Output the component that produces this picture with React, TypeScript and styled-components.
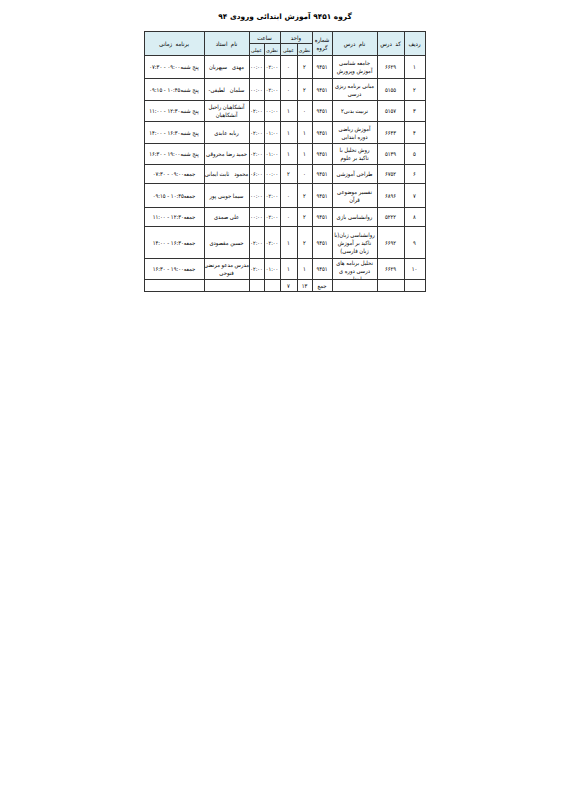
import React from "react";
import styled, { createGlobalStyle } from "styled-components";

const GlobalStyle = createGlobalStyle`
  html, body {
    margin: 0;
    padding: 0;
    background: #ffffff;
  }
  body {
    font-family: "DejaVu Sans Condensed", "DejaVu Sans", sans-serif;
    color: #111;
  }
`;

// column widths, right to left
const COLUMN_WIDTHS = [21, 27, 45, 20, 15, 17, 16, 15, 45, 60];
const HEAD_HEIGHTS = [12, 12];

interface CourseRow {
  height: number;
  cells: string[];
}

// ردیف، کد درس، نام درس، شماره گروه، واحد نظری، واحد عملی، ساعت نظری، ساعت عملی، نام استاد، برنامه زمانی
const rows: CourseRow[] = [
  {
    height: 23,
    cells: ["۱", "۶۶۲۹", "جامعه شناسی\nآموزش وپرورش", "۹۴۵۱", "۲", "۰", "۰۲:۰۰", "۰۰:۰۰", "مهدی   سپهریان", "پنج شنبه۰۹:۰۰ - ۰۷:۳۰"],
  },
  {
    height: 22,
    cells: ["۲", "۵۱۵۵", "مبانی برنامه ریزی\nدرسی", "۹۴۵۱", "۲", "۰", "۰۲:۰۰", "۰۰:۰۰", "سلمان   لطیفی-", "پنج شنبه۱۰:۴۵ - ۰۹:۱۵"],
  },
  {
    height: 21,
    cells: ["۳", "۵۱۵۷", "تربیت بدنی۲", "۹۴۵۱", "۰", "۱", "۰۰:۰۰", "۰۲:۰۰", "آتشکاهیان راحیل\nآتشکاهیان", "پنج شنبه۱۲:۳۰ - ۱۱:۰۰"],
  },
  {
    height: 22,
    cells: ["۴", "۶۶۴۳", "آموزش ریاضی\nدوره ابتدایی", "۹۴۵۱", "۱", "۱", "۰۱:۰۰", "۰۲:۰۰", "ربابه عابدی", "پنج شنبه۱۶:۳۰ - ۱۴:۰۰"],
  },
  {
    height: 21,
    cells: ["۵", "۵۱۳۹", "روش تحلیل با\nتاکید بر علوم", "۹۴۵۱", "۱", "۱", "۰۱:۰۰", "۰۲:۰۰", "حمید رضا محروقی", "پنج شنبه۱۹:۰۰ - ۱۶:۳۰"],
  },
  {
    height: 19,
    cells: ["۶", "۶۷۵۲", "طراحی آموزشی", "۹۴۵۱", "۰", "۲", "۰۰:۰۰", "۰۶:۰۰", "محمود   ثابت ایمانی", "جمعه۰۹:۰۰ - ۰۷:۳۰"],
  },
  {
    height: 24,
    cells: ["۷", "۶۸۹۶", "تفسیر موضوعی\nقرآن", "۹۴۵۱", "۲", "۰", "۰۲:۰۰", "۰۰:۰۰", "سیما جوینی پور", "جمعه۱۰:۴۵ - ۰۹:۱۵"],
  },
  {
    height: 19,
    cells: ["۸", "۵۲۲۲", "روانشناسی بازی", "۹۴۵۱", "۲", "۰", "۰۲:۰۰", "۰۰:۰۰", "علی صمدی", "جمعه۱۲:۳۰ - ۱۱:۰۰"],
  },
  {
    height: 32,
    cells: ["۹", "۶۶۹۲", "روانشناسی زبان(با\nتاکید بر آموزش\nزبان فارسی)", "۹۴۵۱", "۲", "۱", "۰۲:۰۰", "۰۲:۰۰", "حسین مقصودی", "جمعه۱۶:۳۰ - ۱۴:۰۰"],
  },
  {
    height: 21,
    cells: ["۱۰", "۶۶۲۹", "تحلیل برنامه های\nدرسی دوره ی\nابتدایی", "۹۴۵۱", "۱", "۱", "۰۱:۰۰", "۰۲:۰۰", "مدرس مدعو مرتضی\nفتوحی", "جمعه۱۹:۰۰ - ۱۶:۳۰"],
  },
  {
    height: 12,
    cells: ["", "", "", "جمع", "۱۳", "۷", "", "", "", ""],
  },
];

const TIME_COLUMNS = [6, 7];

function App() {
  const templateRows = [...HEAD_HEIGHTS, ...rows.map((r) => r.height)]
    .map((h) => `${h}px`)
    .join(" ");

  return (
    <>
      <GlobalStyle />
      <Page>
        <Title>گروه ۹۴۵۱ آموزش ابتدائی ورودی ۹۴</Title>
        <Schedule
          style={{
            gridTemplateColumns: COLUMN_WIDTHS.map((w) => `${w}px`).join(" "),
            gridTemplateRows: templateRows,
          }}
        >
          <HeadCell $col={1} $row={1} $rowSpan={2}>ردیف</HeadCell>
          <HeadCell $col={2} $row={1} $rowSpan={2}>کد  درس</HeadCell>
          <HeadCell $col={3} $row={1} $rowSpan={2}>نام  درس</HeadCell>
          <HeadCell $col={4} $row={1} $rowSpan={2}>{"شماره\nگروه"}</HeadCell>
          <HeadCell $col={5} $row={1} $colSpan={2}>واحد</HeadCell>
          <HeadCell $col={7} $row={1} $colSpan={2}>ساعت</HeadCell>
          <HeadCell $col={9} $row={1} $rowSpan={2}>نام  استاد</HeadCell>
          <HeadCell $col={10} $row={1} $rowSpan={2}>برنامه  زمانی</HeadCell>
          <HeadCell $col={5} $row={2} $small>نظری</HeadCell>
          <HeadCell $col={6} $row={2} $small>عملی</HeadCell>
          <HeadCell $col={7} $row={2} $small>نظری</HeadCell>
          <HeadCell $col={8} $row={2} $small>عملی</HeadCell>

          {rows.map((row, i) =>
            row.cells.map((text, j) => (
              <Cell key={`${i}-${j}`} $time={TIME_COLUMNS.includes(j)}>
                {text}
              </Cell>
            ))
          )}
        </Schedule>
      </Page>
    </>
  );
}

const Page = styled.div`
  width: 566px;
  min-height: 800px;
  padding-top: 11px;
  box-sizing: border-box;
  display: flex;
  flex-direction: column;
  align-items: center;
  direction: rtl;
`;

const Title = styled.div`
  font-family: "DejaVu Sans", sans-serif;
  font-weight: bold;
  font-size: 7.4px;
  line-height: 12px;
  margin: 0 0 8px 4px;
  color: #000;
`;

const Schedule = styled.div`
  display: grid;
  direction: rtl;
  border-top: 1px solid #333;
  border-right: 1px solid #333;
  margin-left: 3px;
`;

const CellBase = styled.div`
  box-sizing: border-box;
  border-left: 1px solid #333;
  border-bottom: 1px solid #333;
  display: flex;
  align-items: safe center;
  justify-content: center;
  text-align: center;
  overflow: hidden;
  white-space: pre;
  padding: 0 1px;
`;

const HeadCell = styled(CellBase)<{
  $col: number;
  $row: number;
  $colSpan?: number;
  $rowSpan?: number;
  $small?: boolean;
}>`
  grid-column: ${({ $col, $colSpan }) => `${$col} / span ${$colSpan ?? 1}`};
  grid-row: ${({ $row, $rowSpan }) => `${$row} / span ${$rowSpan ?? 1}`};
  background: #daeef3;
  font-size: ${({ $small }) => ($small ? "5.2px" : "6px")};
  line-height: 8px;
  color: #000;
`;

const Cell = styled(CellBase)<{ $time?: boolean }>`
  font-size: ${({ $time }) => ($time ? "5.5px" : "5.8px")};
  line-height: 8px;
  color: #000;
  letter-spacing: ${({ $time }) => ($time ? "-0.2px" : "0")};
  padding: ${({ $time }) => ($time ? "0" : "0 1px")};
`;

export default App;
